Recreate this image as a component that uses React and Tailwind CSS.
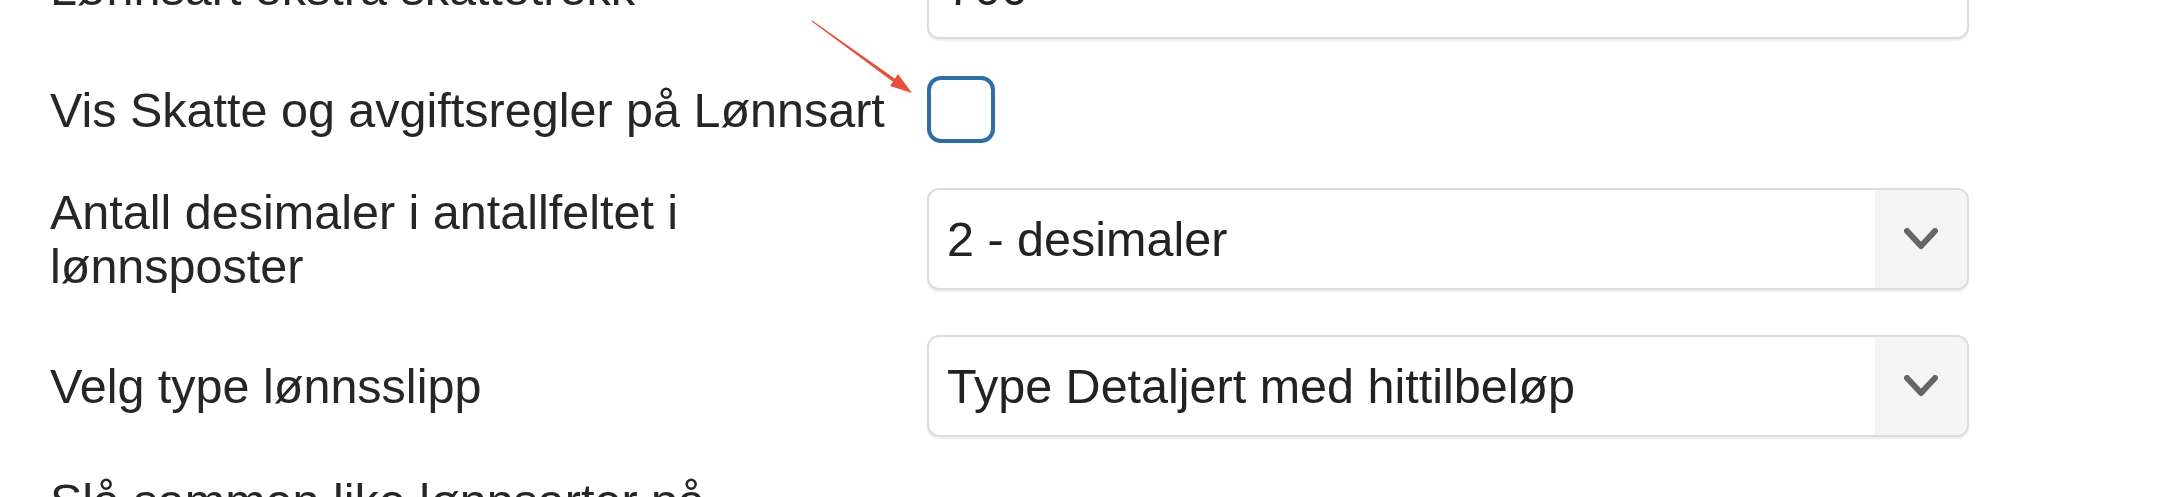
import React from 'react';

const font = { fontFamily: '"Liberation Sans", Arial, sans-serif' };

const Chevron = () => (
  <svg width="34" height="22" viewBox="0 0 34 22" fill="none">
    <polyline points="3,3 17,18 31,3" stroke="#666" strokeWidth="6" strokeLinecap="round" strokeLinejoin="round" />
  </svg>
);

const SelectBox = ({ value }) => (
  <div className="flex h-[102px] w-[1042px] items-stretch overflow-hidden rounded-[12px] border-2 border-[#dcdcdc] bg-white shadow-[0_2px_2px_rgba(0,0,0,0.08)]">
    <div className="flex flex-1 items-center pl-[18px] text-[48.5px] text-[#222]">{value}</div>
    <div className="flex w-[92px] items-center justify-center bg-[#f5f5f5]">
      <Chevron />
    </div>
  </div>
);

const Checkbox = () => (
  <div className="h-[67px] w-[68px] rounded-[14px] border-[4px] border-[#2f6ea5] bg-white" />
);

const Row = ({ label, children, className = '', controlClass = '' }) => (
  <div className={`grid grid-cols-[877px_1042px] items-center ${className}`}>
    <div className="pr-[30px] text-[48.5px] leading-[54px] text-[#262626]">{label}</div>
    <div className={controlClass}>{children}</div>
  </div>
);

export default function App() {
  return (
    <div className="relative h-[497px] w-[2176px] overflow-hidden bg-white" style={font}>
      <div className="mt-[-63px] pl-[50px]">
        <Row label="Lønnsart ekstra skattetrekk">
          <div className="flex h-[102px] w-[1042px] items-center rounded-[12px] border-2 border-[#dcdcdc] bg-white pl-[18px] text-[48.5px] text-[#222] shadow-[0_2px_2px_rgba(0,0,0,0.08)]">
            700
          </div>
        </Row>
        <Row label="Vis Skatte og avgiftsregler på Lønnsart" className="mt-[37px]">
          <Checkbox />
        </Row>
        <Row label="Antall desimaler i antallfeltet i lønnsposter" className="mt-[42px]">
          <SelectBox value="2 - desimaler" />
        </Row>
        <Row label="Velg type lønnsslipp" className="mt-[42px]">
          <SelectBox value="Type Detaljert med hittilbeløp" />
        </Row>
        <Row label="Slå sammen like lønnsarter på lønnsslipp" className="mt-[37px]" controlClass="self-end">
          <Checkbox />
        </Row>
      </div>

      <svg className="absolute left-[805px] top-[15px]" width="115" height="85" viewBox="0 0 115 85">
        <polygon points="7.3,5.6 91,64.5 89,67.5 6.7,6.4" fill="#e4513c" />
        <polygon points="107,78 85,71 93,59" fill="#e4513c" />
      </svg>
    </div>
  );
}
